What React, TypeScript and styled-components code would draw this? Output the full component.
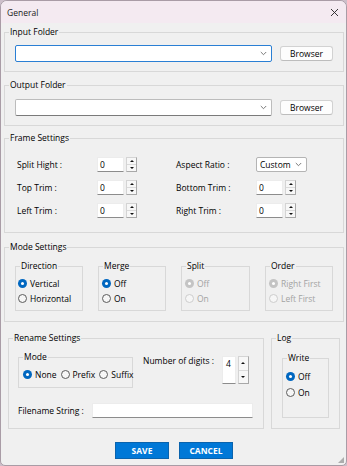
import React from 'react';
import styled, { createGlobalStyle } from 'styled-components';

const Global = createGlobalStyle`
  html, body { margin: 0; padding: 0; background: #cdbfca; }
  body { font-family: "Open Sans", "Noto Sans", sans-serif; font-size: 8.5px; font-weight: 500; color: #000; }
  * { box-sizing: border-box; }
`;

const Window = styled.div`
  position: relative;
  width: 347px;
  height: 466px;
  background: #f0f0f0;
  border: 1px solid #a99ca6;
  border-radius: 7px 7px 5px 5px;
  display: flex;
  flex-direction: column;
  overflow: hidden;
`;

const TitleBar = styled.div`
  height: 22px;
  flex: none;
  background: #f4eaf1;
  display: flex;
  align-items: center;
  justify-content: space-between;
  padding: 0 7px 0 6px;
  font-size: 8.5px;
  font-weight: 400;
  color: #1a1a1a;
`;

const Body = styled.div`
  display: flex;
  flex-direction: column;
  padding: 3px 2px 0 3px;
`;

const Group = styled.fieldset<{ $h: number; $w?: number; $mt?: number }>`
  margin: ${p => p.$mt ?? 0}px 0 0 0;
  padding: 0;
  min-width: 0;
  border: 1px solid #d8d8d8;
  height: ${p => p.$h}px;
  width: ${p => (p.$w ? `${p.$w}px` : 'auto')};
  flex: none;
`;

const Legend = styled.legend<{ $muted?: boolean }>`
  padding: 0 1px;
  margin-left: 4px;
  line-height: 12px;
  font-size: 8.5px;
  color: ${p => (p.$muted ? '#9b9b9b' : '#000')};
`;

const FolderRow = styled.div<{ $pt: number }>`
  display: flex;
  align-items: center;
  gap: 8px;
  padding: ${p => p.$pt}px 0 0 10px;
`;

const Combo = styled.div<{ $focused?: boolean }>`
  position: relative;
  width: 257px;
  height: 17px;
  background: #fff;
  border: 1px solid ${p => (p.$focused ? '#2a7fd4' : '#bcbcbc')};
  border-bottom-color: ${p => (p.$focused ? '#2a7fd4' : '#7a7a7a')};
  border-radius: 2px;
  display: flex;
  align-items: center;
  justify-content: flex-end;
  padding-right: 4px;
`;

const Chevron = () => (
  <svg width="7" height="5" viewBox="0 0 7 5">
    <path d="M0.8 1 L3.5 3.7 L6.2 1" fill="none" stroke="#6b6b6b" strokeWidth="0.9" />
  </svg>
);

const BrowseButton = styled.button`
  width: 53px;
  height: 15px;
  padding: 0;
  background: #fdfdfd;
  border: 1px solid #d2d2d2;
  border-bottom-color: #bdbdbd;
  border-radius: 3px;
  font-family: inherit;
  font-size: 8.5px;
  font-weight: 500;
  color: #000;
  line-height: 13px;
`;

const FrameGrid = styled.div`
  display: grid;
  grid-template-columns: 80px 79px 80px auto;
  grid-auto-rows: 15px;
  row-gap: 8px;
  align-items: center;
  padding: 13px 0 0 12px;
`;

const Label = styled.span`
  font-size: 8.5px;
  white-space: nowrap;
`;

const SpinBox = styled.div<{ $tall?: boolean }>`
  display: flex;
  height: ${p => (p.$tall ? 28 : 15)}px;
  width: ${p => (p.$tall ? 27 : 40)}px;
`;

const SpinField = styled.div<{ $tall?: boolean }>`
  flex: 1;
  background: #fff;
  border: 1px solid #ececec;
  border-bottom-color: #8c8c8c;
  padding-left: ${p => (p.$tall ? 3 : 2)}px;
  font-size: 8.5px;
  line-height: ${p => (p.$tall ? 14 : 13)}px;
`;

const SpinCol = styled.div`
  width: 11px;
  margin-left: 2px;
  display: flex;
  flex-direction: column;
  border: 1px solid #d4d4d4;
  border-right-color: #a8a8a8;
  border-bottom-color: #a8a8a8;
  background: #f7f7f7;
`;

const SpinBtn = styled.div<{ $down?: boolean }>`
  flex: 1;
  display: flex;
  align-items: center;
  justify-content: center;
  border-top: ${p => (p.$down ? '1px solid #dadada' : 'none')};
  &::after {
    content: '';
    width: 0;
    height: 0;
    border-left: 2px solid transparent;
    border-right: 2px solid transparent;
    ${p => (p.$down ? 'border-top: 2px solid #111;' : 'border-bottom: 2px solid #111;')}
  }
`;

const Spinner = ({ value, tall }: { value: string; tall?: boolean }) => (
  <SpinBox $tall={tall}>
    <SpinField $tall={tall}>{value}</SpinField>
    <SpinCol>
      <SpinBtn />
      <SpinBtn $down />
    </SpinCol>
  </SpinBox>
);

const Select = styled.div`
  width: 51px;
  height: 15px;
  background: #fff;
  border: 1px solid #b4b4b4;
  border-radius: 2px;
  display: flex;
  align-items: center;
  justify-content: space-between;
  padding: 0 4px 0 3px;
  font-size: 8.5px;
`;

const ModeRow = styled.div`
  display: flex;
  justify-content: space-between;
  padding: 7px 10px 0 10px;
`;

const RadioList = styled.div<{ $pl: number; $row: number }>`
  display: flex;
  flex-direction: column;
  padding: 4px 0 0 ${p => p.$pl}px;
  & > * { height: ${p => p.$row}px; }
`;

const RadioLine = styled.div`
  display: flex;
  align-items: center;
  gap: 3px;
`;

const RadioDot = styled.span<{ $on?: boolean; $disabled?: boolean }>`
  width: 9px;
  height: 9px;
  border-radius: 50%;
  flex: none;
  background: ${p => (p.$on ? (p.$disabled ? '#c4c4c4' : '#0067c0') : '#f6f6f6')};
  border: ${p => (p.$on ? 'none' : `1px solid ${p.$disabled ? '#cdcdcd' : '#5c5c5c'}`)};
  display: flex;
  align-items: center;
  justify-content: center;
  &::after {
    content: '';
    display: ${p => (p.$on ? 'block' : 'none')};
    width: 3px;
    height: 3px;
    border-radius: 50%;
    background: #fff;
  }
`;

const RadioText = styled.span<{ $disabled?: boolean }>`
  font-size: 8.5px;
  font-weight: ${p => (p.$disabled ? 400 : 500)};
  color: ${p => (p.$disabled ? '#a3a3a3' : '#000')};
  white-space: nowrap;
`;

const Radio = ({ label, on, disabled }: { label: string; on?: boolean; disabled?: boolean }) => (
  <RadioLine>
    <RadioDot $on={on} $disabled={disabled} />
    <RadioText $disabled={disabled}>{label}</RadioText>
  </RadioLine>
);

const BottomRow = styled.div`
  display: flex;
  gap: 7px;
  margin: 10px 0 0 4px;
`;

const RenameTop = styled.div`
  display: flex;
  align-items: flex-start;
  padding: 7px 0 0 9px;
`;

const InlineRadios = styled.div`
  display: flex;
  gap: 4px;
  padding: 4px 0 0 4px;
  height: 19px;
  align-items: center;
`;

const DigitsLabel = styled(Label)`
  margin: 4px 8px 0 10px;
`;

const DigitsSpin = styled.div`
  margin-top: 5px;
`;

const FilenameRow = styled.div`
  display: flex;
  align-items: center;
  padding: 15px 0 0 9px;
`;

const FilenameLabel = styled(Label)`
  width: 74px;
`;

const TextInput = styled.div`
  width: 161px;
  height: 15px;
  background: #fff;
  border: 1px solid #ececec;
  border-bottom-color: #8c8c8c;
`;

const LogContent = styled.div`
  padding: 8px 0 0 10px;
`;

const ButtonRow = styled.div`
  display: flex;
  justify-content: center;
  gap: 10px;
  margin-top: 13px;
`;

const PrimaryButton = styled.button`
  width: 54px;
  height: 17px;
  padding: 0;
  background: #0078d7;
  border: 1px solid #0a63ad;
  color: #fff;
  font-family: inherit;
  font-weight: 700;
  font-size: 8.5px;
  line-height: 15px;
`;

const Grip = styled.div`
  position: absolute;
  right: 2px;
  bottom: 2px;
  width: 6px;
  height: 6px;
  background:
    radial-gradient(circle, #a8a8a8 0.7px, transparent 0.8px) 0 0 / 2px 2px;
  clip-path: polygon(100% 0, 100% 100%, 0 100%);
`;

export default function App() {
  return (
    <>
      <Global />
      <Window>
        <TitleBar>
          <span>General</span>
          <svg width="9" height="9" viewBox="0 0 9 9">
            <path d="M1 1 L8 8 M8 1 L1 8" stroke="#222" strokeWidth="0.9" />
          </svg>
        </TitleBar>
        <Body>
          <Group $h={46}>
            <Legend>Input Folder</Legend>
            <FolderRow $pt={7}>
              <Combo $focused>
                <Chevron />
              </Combo>
              <BrowseButton>Browser</BrowseButton>
            </FolderRow>
          </Group>

          <Group $h={47} $mt={7}>
            <Legend>Output Folder</Legend>
            <FolderRow $pt={8}>
              <Combo>
                <Chevron />
              </Combo>
              <BrowseButton>Browser</BrowseButton>
            </FolderRow>
          </Group>

          <Group $h={101} $mt={6}>
            <Legend>Frame Settings</Legend>
            <FrameGrid>
              <Label>Split Hight :</Label>
              <Spinner value="0" />
              <Label>Aspect Ratio :</Label>
              <Select>
                <span>Custom</span>
                <Chevron />
              </Select>
              <Label>Top Trim :</Label>
              <Spinner value="0" />
              <Label>Bottom Trim :</Label>
              <Spinner value="0" />
              <Label>Left Trim :</Label>
              <Spinner value="0" />
              <Label>Right Trim :</Label>
              <Spinner value="0" />
            </FrameGrid>
          </Group>

          <Group $h={81} $mt={8}>
            <Legend>Mode Settings</Legend>
            <ModeRow>
              <Group $h={51} $w={68}>
                <Legend>Direction</Legend>
                <RadioList $pl={2} $row={15}>
                  <Radio label="Vertical" on />
                  <Radio label="Horizontal" />
                </RadioList>
              </Group>
              <Group $h={51} $w={68}>
                <Legend>Merge</Legend>
                <RadioList $pl={3} $row={15}>
                  <Radio label="Off" on />
                  <Radio label="On" />
                </RadioList>
              </Group>
              <Group $h={51} $w={69}>
                <Legend>Split</Legend>
                <RadioList $pl={3} $row={15}>
                  <Radio label="Off" on disabled />
                  <Radio label="On" disabled />
                </RadioList>
              </Group>
              <Group $h={51} $w={68}>
                <Legend>Order</Legend>
                <RadioList $pl={3} $row={15}>
                  <Radio label="Right First" on disabled />
                  <Radio label="Left First" disabled />
                </RadioList>
              </Group>
            </ModeRow>
          </Group>

          <BottomRow>
            <Group $h={97} $w={256}>
              <Legend>Rename Settings</Legend>
              <RenameTop>
                <Group $h={37} $w={115}>
                  <Legend>Mode</Legend>
                  <InlineRadios>
                    <Radio label="None" on />
                    <Radio label="Prefix" />
                    <Radio label="Suffix" />
                  </InlineRadios>
                </Group>
                <DigitsLabel>Number of digits :</DigitsLabel>
                <DigitsSpin>
                  <Spinner value="4" tall />
                </DigitsSpin>
              </RenameTop>
              <FilenameRow>
                <FilenameLabel>Filename String :</FilenameLabel>
                <TextInput />
              </FilenameRow>
            </Group>

            <Group $h={97} $w={69}>
              <Legend>Log</Legend>
              <LogContent>
                <Group $h={66} $w={47}>
                  <Legend>Write</Legend>
                  <RadioList $pl={3} $row={16}>
                    <Radio label="Off" on />
                    <Radio label="On" />
                  </RadioList>
                </Group>
              </LogContent>
            </Group>
          </BottomRow>

          <ButtonRow>
            <PrimaryButton>SAVE</PrimaryButton>
            <PrimaryButton>CANCEL</PrimaryButton>
          </ButtonRow>
        </Body>
        <Grip />
      </Window>
    </>
  );
}
